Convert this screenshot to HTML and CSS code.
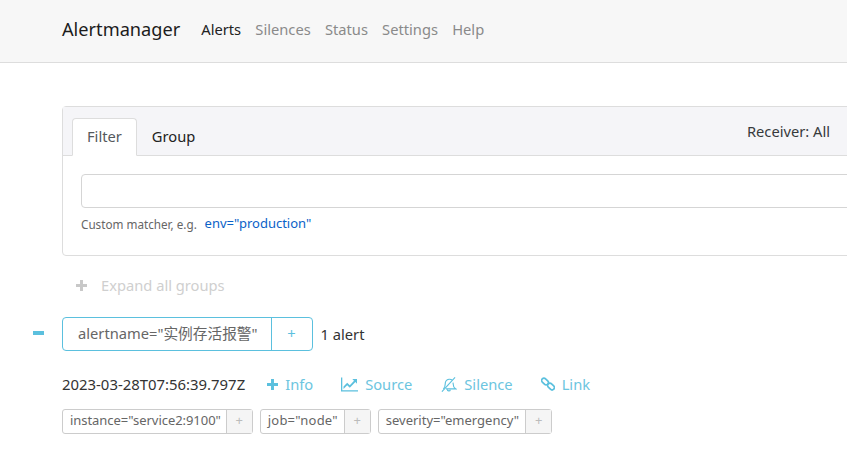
FILE: index.html
```html
<!DOCTYPE html>
<html lang="en">
<head>
  <meta charset="UTF-8">
  <meta name="viewport" content="width=device-width, initial-scale=1.0">
  <title>Alertmanager</title>
  <link rel="stylesheet" href="styles.css">
</head>
<body>
  <nav class="navbar">
    <a class="brand">Alertmanager</a>
    <ul class="nav-links">
      <li class="active">Alerts</li>
      <li>Silences</li>
      <li>Status</li>
      <li>Settings</li>
      <li>Help</li>
    </ul>
  </nav>

  <main class="container">
    <section class="card">
      <div class="card-header">
        <ul class="tabs">
          <li class="tab active">Filter</li>
          <li class="tab">Group</li>
        </ul>
        <div class="receiver">Receiver: All</div>
      </div>
      <div class="card-body">
        <input class="matcher-input" type="text">
        <div class="help">
          <small>Custom matcher, e.g.</small>
          <a class="example">env="production"</a>
        </div>
      </div>
    </section>

    <div class="expand">
      <svg class="icon-plus" viewBox="0 0 12 12"><path d="M4.4 0h3.2v4.4H12v3.2H7.6V12H4.4V7.6H0V4.4h4.4z"/></svg>
      <span>Expand all groups</span>
    </div>

    <div class="group">
      <span class="collapse"></span>
      <div class="btn-group">
        <span class="btn-main">alertname="实例存活报警"</span>
        <span class="btn-add">+</span>
      </div>
      <span class="count">1 alert</span>
    </div>

    <div class="alert-row">
      <span class="time">2023-03-28T07:56:39.797Z</span>
      <a class="action">
        <svg class="act-icon" viewBox="0 0 12 12"><path d="M4.4 0h3.2v4.4H12v3.2H7.6V12H4.4V7.6H0V4.4h4.4z"/></svg>
        Info
      </a>
      <a class="action">
        <svg class="act-icon wide" viewBox="0 0 17 14"><path d="M0 0h1.3v12.7H17V14H0z"/><path d="M2.5 11.5V9l3.700-3.800 2.600 2.500L13 3.200 11.300 1.600H16v4.700l-1.600-1.700-5.600 5.700-2.600-2.600-3.700 3.800z"/></svg>
        Source
      </a>
      <a class="action">
        <svg class="act-icon wide outline" viewBox="0 0 17 16"><path d="M1.500 15.500 15.500.5"/><path d="M3 12.600c1.400-1.200 2-3 2-5.100 0-2.600 1.600-4.700 4-5.100 1.300-.2 2.400.1 3.300.8M13.300 6c.1.5.2 1 .2 1.500 0 2.300.8 4 2.500 5.100H5.800"/><path d="M7.200 13c0 2.400 3 2.400 3.300.4"/></svg>
        Silence
      </a>
      <a class="action">
        <svg class="act-icon outline bold" viewBox="0 0 14 14"><rect x="0.200" y="2.200" width="7.600" height="4.600" rx="2.300" transform="rotate(45 4 4.500)"/><rect x="6.200" y="7.200" width="7.600" height="4.600" rx="2.300" transform="rotate(45 10 9.500)"/></svg>
        Link
      </a>
    </div>

    <div class="labels">
      <div class="label"><span class="label-text instance">instance="service2:9100"</span><span class="label-add">+</span></div>
      <div class="label"><span class="label-text job">job="node"</span><span class="label-add">+</span></div>
      <div class="label"><span class="label-text">severity="emergency"</span><span class="label-add">+</span></div>
    </div>
  </main>
</body>
</html>
```

FILE: styles.css
```css
html, body {
  margin: 0;
  padding: 0;
  overflow: hidden;
  height: 100%;
}

body {
  font-family: "Noto Sans", "Noto Sans CJK SC", sans-serif;
  font-size: 14.7px;
  color: #373a3c;
  background-color: #fff;
}

ul {
  list-style: none;
  margin: 0;
  padding: 0;
}

.navbar {
  display: flex;
  align-items: center;
  height: 57px;
  padding: 0 0 5px 62px;
  background-color: #f7f7f7;
  border-bottom: 1px solid #ddd;
}

.brand {
  font-size: 18.2px;
  color: #1c1c1c;
  margin-right: 21px;
}

.nav-links {
  display: flex;
  gap: 14.2px;
  color: #8a8a8a;
}

.nav-links .active {
  color: #222;
}

.container {
  width: 868px;
  padding: 43px 0 0 62px;
}

.card {
  border: 1px solid #ddd;
  border-radius: 4px;
  height: 150px;
  box-sizing: border-box;
}

.card-header {
  display: flex;
  justify-content: space-between;
  height: 49px;
  padding: 11px 0 0 9px;
  box-sizing: border-box;
  background-color: #f5f5f8;
  border-bottom: 1px solid #ddd;
}

.tabs {
  display: flex;
  height: 38px;
}

.tab {
  padding: 0 14px;
  line-height: 34px;
  border: 1px solid transparent;
  color: #222;
}

.tab.active {
  background-color: #fff;
  color: #55595c;
  border-color: #ddd #ddd #fff;
  border-radius: 4px 4px 0 0;
}

.receiver {
  margin-right: 99px;
  line-height: 26px;
  color: #373a3c;
}

.card-body {
  padding: 18px;
}

.matcher-input {
  display: block;
  width: 100%;
  height: 34px;
  box-sizing: border-box;
  border: 1px solid #d5d5d5;
  border-radius: 4px;
}

.help {
  margin-top: 4px;
  line-height: 22px;
}

.help small {
  font-size: 11.7px;
  color: #666;
  margin-right: 4px;
}

.example {
  font-size: 13px;
  color: #0a62c8;
  vertical-align: 1px;
}

.expand {
  display: flex;
  align-items: center;
  gap: 14px;
  height: 20px;
  margin: 19px 0 0 14px;
  color: #cfcfcf;
}

.icon-plus {
  width: 11px;
  height: 11px;
  fill: #c8c8c8;
}

.group {
  display: flex;
  align-items: center;
  margin-top: 22px;
  position: relative;
}

.collapse {
  position: absolute;
  left: -29px;
  top: 14px;
  width: 11px;
  height: 4px;
  background-color: #5bc0de;
}

.btn-group {
  display: flex;
  height: 34px;
  box-sizing: border-box;
  line-height: 31px;
  border: 1px solid #5bc0de;
  border-radius: 4px;
}

.btn-main {
  padding: 0 13px 0 15px;
  color: #666;
  border-right: 1px solid #5bc0de;
}

.btn-add {
  width: 40px;
  text-align: center;
  color: #5bc0de;
}

.count {
  margin-left: 8px;
  color: #333;
}

.alert-row {
  display: flex;
  align-items: center;
  height: 20px;
  margin-top: 23px;
}

.time {
  color: #333;
  font-size: 14.9px;
  margin-right: 22px;
}

.action {
  display: flex;
  align-items: center;
  gap: 7px;
  margin-right: 28px;
  color: #6cc5e0;
}

.act-icon {
  width: 11px;
  height: 11px;
  fill: #5bc0de;
}

.act-icon.wide {
  width: 17px;
  height: 15px;
}

.act-icon.outline {
  fill: none;
  stroke: #5bc0de;
  stroke-width: 1.2;
}

.act-icon.bold {
  width: 14px;
  height: 14px;
  stroke-width: 1.7;
}

.labels {
  display: flex;
  gap: 7px;
  margin-top: 15px;
}

.label {
  display: flex;
  height: 25px;
  box-sizing: border-box;
  font-size: 13px;
  line-height: 21px;
  border: 1px solid #ccc;
  border-radius: 3px;
  color: #666;
}

.label-text {
  padding: 0 6px 0 7px;
}

.label-text.instance {
  letter-spacing: -0.05px;
  padding-right: 5px;
}

.label-text.job {
  letter-spacing: 0.2px;
}

.label-add {
  width: 25px;
  text-align: center;
  color: #bbb;
  background-color: #f5f5f5;
  border-left: 1px solid #ccc;
}
```
